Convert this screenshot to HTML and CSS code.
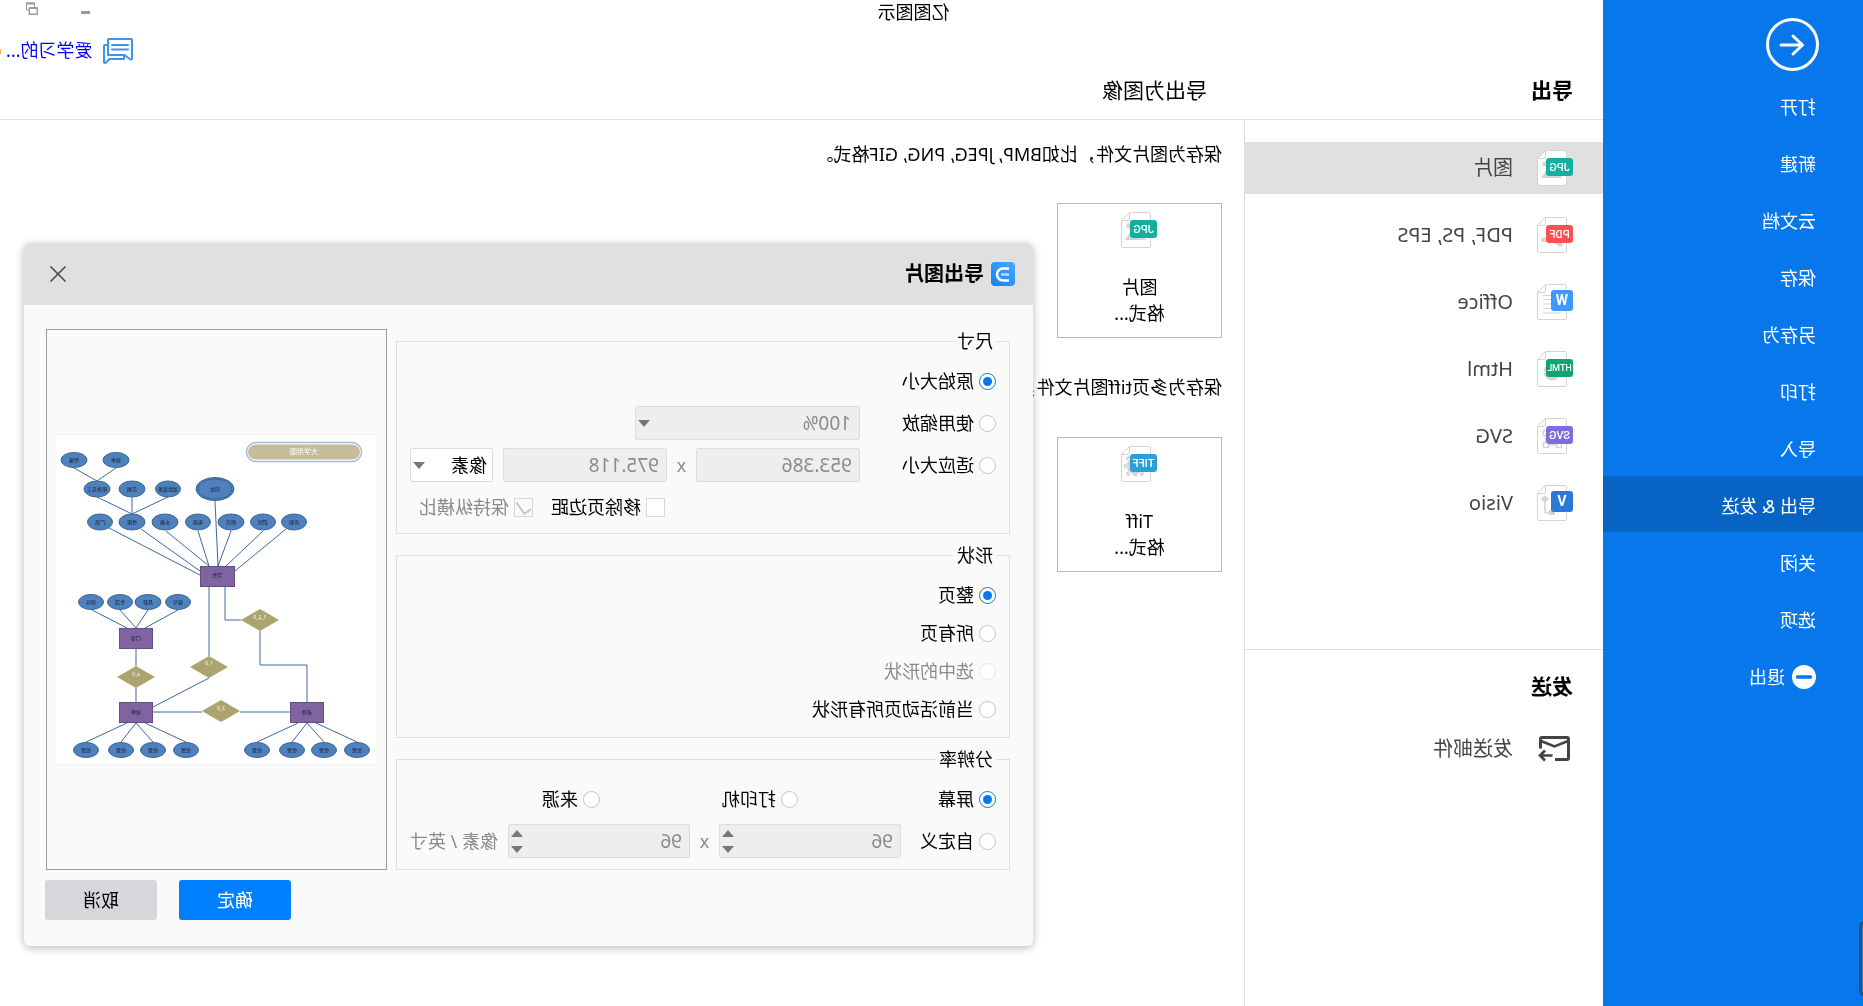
FILE: index.html
```html
<!DOCTYPE html>
<html lang="zh-CN">
<head>
<meta charset="utf-8">
<title>亿图图示</title>
<link rel="stylesheet" href="styles.css">
</head>
<body>
<svg class="defs" aria-hidden="true">
  <symbol id="doc" viewBox="0 0 36 36">
    <path d="M8 .5h19.500l8 8v25.500a1.500 1.500 0 0 1-1.500 1.500H8A1.500 1.500 0 0 1 6.500 34V2A1.500 1.500 0 0 1 8 .5z" fill="#fff" stroke="#d4d4d4"/>
    <path d="M27.500.5V7a1.500 1.500 0 0 0 1.500 1.500h6.500" fill="none" stroke="#d4d4d4"/>
  </symbol>
</svg>
<div class="app">
  <aside class="sidebar">
    <button class="back" type="button" aria-label="返回">
      <svg width="53" height="53" viewBox="0 0 53 53" fill="none" stroke="#fff" stroke-width="3" stroke-linecap="round" stroke-linejoin="round"><circle cx="26.500" cy="26.500" r="25"/><path d="M38 27H17M26 18l-9.500 9 9.500 9"/></svg>
    </button>
    <nav class="menu">
      <a href="#">打开</a>
      <a href="#">新建</a>
      <a href="#">云文档</a>
      <a href="#">保存</a>
      <a href="#">另存为</a>
      <a href="#">打印</a>
      <a href="#">导入</a>
      <a href="#" class="active">导出 &amp; 发送</a>
      <a href="#">关闭</a>
      <a href="#">选项</a>
      <a href="#"><svg width="24" height="24" viewBox="0 0 24 24"><circle cx="12" cy="12" r="12" fill="#fff"/><path d="M5.500 12h13" stroke="#0877ec" stroke-width="3.500" stroke-linecap="round"/></svg>退出</a>
    </nav>
    <span class="edge-tab"></span>
  </aside>

  <div class="main">
    <header class="top">
      <div class="app-title">亿图图示</div>
      <div class="window-buttons">
        <button type="button" aria-label="最小化"><svg width="12" height="14" viewBox="0 0 12 14"><path d="M1 10.500h9" stroke="#999" stroke-width="3"/></svg></button>
        <button type="button" aria-label="还原"><svg width="12" height="14" viewBox="0 0 12 14" fill="none" stroke="#999"><path d="M3.500 5V1h8v7H9" stroke-width="1"/><path d="M3 1.500h9M.5 6h8" stroke-width="2"/><path d="M.7 6v6.300h8V6z" stroke-width="1.400"/></svg></button>
      </div>
      <div class="account">
        <svg width="30" height="26" viewBox="0 0 30 26" fill="none" stroke="#3a95f0" stroke-width="2" stroke-linejoin="round" stroke-linecap="round"><path d="M2 1h22a1 1 0 0 1 1 1v15H8.500L2.500 21.500 1 21V2a1 1 0 0 1 1-1z"/><path d="M25 7h3a1 1 0 0 1 1 1v16.500L27.500 25 23.500 21H9v-4M5 7h16M5 11.500h16"/></svg>
        <a href="#">爱学习的...</a>
        <span class="vip"></span>
      </div>
      <div class="headings">
        <h1>导出</h1>
        <h2>导出为图像</h2>
      </div>
    </header>

    <div class="columns">
      <section class="formats">
        <ul class="format-list">
          <li><a href="#" class="selected"><svg class="ficon" viewBox="0 0 36 36"><use href="#doc"/><path d="M11 28l8-11 4 5 3-3 6 9z" fill="#d4d4d4"/><circle cx="28" cy="14" r="2.500" fill="#d4d4d4"/><rect y="8" width="27" height="18" rx="3" fill="#14b09f"/><text x="13.500" y="21" class="tag">JPG</text></svg>图片</a></li>
          <li><a href="#"><svg class="ficon" viewBox="0 0 36 36"><use href="#doc"/><path d="M10 28c0-4 7-5 10-6 5-1 12-3 12 1s-6 1-9 1c-5 0-9 9-13 4z" fill="#d4d4d4"/><rect y="8" width="27" height="18" rx="3" fill="#ff4f55"/><text x="13.500" y="21" class="tag">PDF</text></svg>PDF, PS, EPS</a></li>
          <li><a href="#"><svg class="ficon" viewBox="0 0 36 36"><use href="#doc"/><path d="M12 11.500h18M12 15.500h18M12 20h18M12 24.500h18M12 29h18" stroke="#d4d4d4"/><rect y="6" width="22" height="21" rx="3" fill="#3d98ff"/><text x="11" y="21" class="tag big">W</text></svg>Office</a></li>
          <li><a href="#"><svg class="ficon" viewBox="0 0 36 36"><use href="#doc"/><circle cx="21" cy="21" r="8.500" fill="#d4d4d4"/><path d="M12 21c3 4 14 4 18-2" stroke="#fff" fill="none"/><rect y="8" width="27" height="18" rx="3" fill="#0fa473"/><text x="13.500" y="20" class="tag small">HTML</text></svg>Html</a></li>
          <li><a href="#"><svg class="ficon" viewBox="0 0 36 36"><use href="#doc"/><path d="M11.500 24.500h5v5h-5zM24.500 24.500h5v5h-5zM24.500 12.500h5v5h-5zM16.500 27h8M27 17.500v7M14 17v7.500" stroke="#d4d4d4" fill="none" stroke-width="1.500"/><rect y="8" width="27" height="18" rx="3" fill="#7f6de0"/><text x="13.500" y="21" class="tag">SVG</text></svg>SVG</a></li>
          <li><a href="#"><svg class="ficon" viewBox="0 0 36 36"><use href="#doc"/><path d="M28 10l4 4-4 4-4-4z M18 25h6v5h-6z" fill="#d4d4d4"/><path d="M28 14v13.500h-7" stroke="#d4d4d4" fill="none" stroke-width="1.500"/><rect y="6" width="22" height="21" rx="3" fill="#2a78d8"/><text x="11" y="21" class="tag big">V</text></svg>Visio</a></li>
        </ul>
        <div class="send">
          <h3>发送</h3>
          <a href="#"><svg class="ficon" viewBox="0 0 36 36" fill="none" stroke="#444" stroke-width="3"><path d="M18 28.500H6a1.500 1.500 0 0 1-1.500-1.500V8A1.500 1.500 0 0 1 6 6.500h25A1.500 1.500 0 0 1 32.500 8v9.500" /><path d="M5 10l13.500 5.500L32 10" stroke-width="2.500"/><path d="M20.500 24.500H33M28 19.500l5 5-5 5" transform="matrix(-1 0 0 1 53.500 0)" stroke-width="0"/><path d="M20.500 24.500H32M28.500 19.500l-0 0M28 19.500l5 5-5 5" stroke-width="2.700"/></svg>发送邮件</a>
        </div>
      </section>

      <section class="content">
        <p>保存为图片文件，比如BMP, JPEG, PNG, GIF格式。</p>
        <button class="card" type="button">
          <svg class="ficon" viewBox="0 0 36 36"><use href="#doc"/><path d="M11 28l8-11 4 5 3-3 6 9z" fill="#d4d4d4"/><circle cx="28" cy="14" r="2.500" fill="#d4d4d4"/><rect y="8" width="27" height="18" rx="3" fill="#14b09f"/><text x="13.500" y="21" class="tag">JPG</text></svg>
          <span>图片<br>格式...</span>
        </button>
        <p>保存为多页tiff图片文件，</p>
        <button class="card" type="button">
          <svg class="ficon" viewBox="0 0 36 36"><use href="#doc"/><circle cx="22" cy="20" r="6.500" fill="none" stroke="#d4d4d4" stroke-width="4"/><path d="M22 10v3M22 27v3M31 20h2M28 13l2-2M28 27l2 2M16 27l-2 2" stroke="#d4d4d4" stroke-width="4"/><rect y="8" width="27" height="18" rx="3" fill="#2a9fd8"/><text x="13.500" y="21" class="tag">TIFF</text></svg>
          <span>Tiff<br>格式...</span>
        </button>
      </section>
    </div>
  </div>

  <form class="dialog" role="dialog" aria-labelledby="dlg-title">
    <header class="dialog-bar">
      <svg width="24" height="24" viewBox="0 0 24 24"><defs><linearGradient id="lg" x1="0" y1="0" x2="1" y2="1"><stop offset="0" stop-color="#45aaff"/><stop offset="1" stop-color="#1a7dff"/></linearGradient></defs><rect width="24" height="24" rx="4" fill="url(#lg)"/><path d="M6 6.500h6a6 6 0 0 1 0 12H6" fill="none" stroke="#fff" stroke-width="2.500"/><path d="M6 12.500h8" stroke="#b5dbff" stroke-width="2.500"/></svg>
      <h2 id="dlg-title">导出图片</h2>
      <button type="button" class="close" aria-label="关闭"><svg width="16" height="16" viewBox="0 0 16 16" stroke="#444" stroke-width="1.500"><path d="M.5.5l15 15M15.500.5l-15 15"/></svg></button>
    </header>
    <div class="dialog-body">
      <div class="settings">
        <fieldset class="size">
          <legend>尺寸</legend>
          <div class="row"><label class="lead"><input type="radio" name="size" checked>原始大小</label></div>
          <div class="row"><label class="lead"><input type="radio" name="size">使用缩放</label>
            <span class="combo zoom"><select disabled aria-label="缩放"><option>100%</option></select></span></div>
          <div class="row"><label class="lead"><input type="radio" name="size">适应大小</label>
            <input class="num" type="text" value="953.386" disabled aria-label="宽度"><span class="times">x</span><input class="num" type="text" value="975.118" disabled aria-label="高度">
            <span class="combo unit"><select aria-label="单位"><option>像素</option></select></span></div>
          <div class="row checks"><label><input type="checkbox">移除页边距</label><label class="off"><input type="checkbox" checked disabled>保持纵横比</label></div>
        </fieldset>
        <fieldset class="shape">
          <legend>形状</legend>
          <div class="row"><label><input type="radio" name="shape" checked>整页</label></div>
          <div class="row"><label><input type="radio" name="shape">所有页</label></div>
          <div class="row"><label class="off"><input type="radio" name="shape" disabled>选中的形状</label></div>
          <div class="row"><label><input type="radio" name="shape">当前活动页所有形状</label></div>
        </fieldset>
        <fieldset class="dpi">
          <legend>分辨率</legend>
          <div class="row thirds"><label><input type="radio" name="dpi" checked>屏幕</label><label><input type="radio" name="dpi">打印机</label><label><input type="radio" name="dpi">来源</label></div>
          <div class="row"><label class="custom"><input type="radio" name="dpi">自定义</label>
            <span class="spin"><input type="number" value="96" disabled aria-label="水平分辨率"></span><span class="times">x</span><span class="spin"><input type="number" value="96" disabled aria-label="垂直分辨率"></span>
            <span class="unit-text">像素 / 英寸</span></div>
        </fieldset>
      </div>
      <div class="preview">
        <svg class="paper" viewBox="0 0 322 329">
          <g stroke="#3d6a9c" stroke-width="1" fill="none">
            <path d="M303 33L280 46 261 33M280 62L245 79V62M209 62L245 79"/>
            <path d="M268 93L177 140M236 94L177 136M211 96L168 131 179 96M162 66L159 131 146 96M114 96L151 131M91 94L142 136"/>
            <path d="M285 175L250 193M257 175L241 193 229 175M199 175L232 193M168 152V221M168 243L224 272M241 214V231M241 253V267M224 277H175M137 277H87"/>
            <path d="M152 152V185H136M117 196V230H70V267"/>
            <path d="M250 288L291 307M256 307L241 288 224 307M232 288L191 307M79 288L120 307M85 307L70 288 53 307M61 288L20 307"/>
          </g>
          <rect x="15.500" y="7.500" width="115" height="19" rx="9.500" fill="#fff" stroke="#a9b8dc" stroke-width="1.500"/>
          <rect x="17" y="9.500" width="112" height="15" rx="7.500" fill="#c4bd97"/>
          <g fill="#4f81bd" stroke="#3a6698">
            <ellipse cx="303" cy="25" rx="13" ry="7.500"/><ellipse cx="261" cy="25" rx="13" ry="7.500"/>
            <ellipse cx="280" cy="54" rx="13" ry="8"/><ellipse cx="245" cy="54" rx="13" ry="8"/><ellipse cx="209" cy="54" rx="12.500" ry="8"/>
            <ellipse cx="162" cy="54" rx="19" ry="11.500"/><ellipse cx="162" cy="54" rx="17" ry="10"/>
            <ellipse cx="277" cy="87" rx="12.500" ry="8"/><ellipse cx="245" cy="87" rx="13" ry="8"/><ellipse cx="212" cy="87" rx="13" ry="8"/><ellipse cx="179" cy="87" rx="12.500" ry="8"/><ellipse cx="146" cy="87" rx="13" ry="8"/><ellipse cx="114" cy="87" rx="12.500" ry="8"/><ellipse cx="83" cy="87" rx="12.500" ry="8"/>
            <ellipse cx="286" cy="167" rx="12.500" ry="7.500"/><ellipse cx="257" cy="167" rx="12.500" ry="7.500"/><ellipse cx="229" cy="167" rx="13" ry="7.500"/><ellipse cx="199" cy="167" rx="12.500" ry="7.500"/>
            <ellipse cx="291" cy="315" rx="12.500" ry="7.500"/><ellipse cx="256" cy="315" rx="12.500" ry="7.500"/><ellipse cx="224" cy="315" rx="12.500" ry="7.500"/><ellipse cx="191" cy="315" rx="12.500" ry="7.500"/>
            <ellipse cx="120" cy="315" rx="12.500" ry="7.500"/><ellipse cx="85" cy="315" rx="12.500" ry="7.500"/><ellipse cx="53" cy="315" rx="12.500" ry="7.500"/><ellipse cx="20" cy="315" rx="12.500" ry="7.500"/>
          </g>
          <g fill="#8064a2" stroke="#664e85">
            <rect x="142.500" y="131.500" width="34" height="20"/><rect x="224.500" y="193.500" width="33" height="20"/><rect x="224.500" y="267.500" width="33" height="20"/><rect x="53.500" y="267.500" width="33" height="20"/>
          </g>
          <path d="M241 231l19 11-19 11-19-11zM168 221l19 11-19 11-19-11zM117 174l19 11-19 11-19-11zM156 265l19 11-19 11-19-11z" fill="#aca46f"/>
          <g class="node-text">
            <text x="303" y="27">传输</text><text x="261" y="27">效率</text><text x="280" y="56">研发员工</text><text x="245" y="56">示图</text><text x="209" y="56">试验设备</text><text x="162" y="56">岗位</text>
            <text x="277" y="89">厂商</text><text x="245" y="89">性能</text><text x="212" y="89">水箱</text><text x="179" y="89">电源</text><text x="146" y="89">研究</text><text x="114" y="89">识别</text><text x="83" y="89">房租</text>
            <text x="160" y="142">学生</text><text x="286" y="169">领导</text><text x="257" y="169">生活</text><text x="229" y="169">月薪</text><text x="199" y="169">编号</text>
            <text x="241" y="205">门诊</text><text x="241" y="279">效率</text><text x="70" y="279">老师</text>
            <text x="291" y="317">位置</text><text x="256" y="317">位置</text><text x="224" y="317">位置</text><text x="191" y="317">位置</text><text x="120" y="317">位置</text><text x="85" y="317">位置</text><text x="53" y="317">位置</text><text x="20" y="317">位置</text>
          </g>
          <g class="node-text light">
            <text x="73" y="19" class="pill">大学用图</text>
            <text x="117" y="184">1_2_0</text><text x="168" y="230">1_0</text><text x="241" y="241">a_0</text><text x="156" y="275">2_0</text>
          </g>
        </svg>
      </div>
    </div>
    <footer class="dialog-actions">
      <button type="submit" class="ok">确定</button>
      <button type="button" class="cancel">取消</button>
    </footer>
  </form>
</div>
</body>
</html>
```
FILE: styles.css
```css
* { box-sizing: border-box; }

body {
  margin: 0;
  background: #fff;
  color: #000;
  font: 18px/26px "Noto Sans", "Noto Sans CJK SC", sans-serif;
  font-kerning: none;
  overflow: hidden;
}

button, input, select { font: inherit; font-kerning: none; color: inherit; }
button { padding: 0; border: 0; background: none; }
a { color: inherit; text-decoration: none; }
h1, h2, h3, p, ul { margin: 0; padding: 0; }
svg { display: block; flex: none; }
.defs { position: absolute; width: 0; height: 0; }

/* The whole window is shown mirrored, left to right. */
.app {
  position: relative;
  display: flex;
  min-height: 100vh;
  transform: scaleX(-1);
}

/* Sidebar */
.sidebar {
  position: relative;
  flex: none;
  width: 260px;
  padding-top: 18px;
  background: #0877ec;
  color: #fff;
}
.back { display: block; margin-left: 44px; }
.menu {
  display: flex;
  flex-direction: column;
  gap: 1px;
  margin-top: 6px;
}
.menu a {
  display: flex;
  align-items: center;
  gap: 7px;
  height: 56px;
  padding: 4px 0 0 47px;
}
.menu .active { background: #0764c4; }
.edge-tab {
  position: absolute;
  left: -6px;
  bottom: 10px;
  width: 10px;
  height: 75px;
  border: 3px solid #29507c;
  border-radius: 5px;
  background: #3c7fc9;
}

/* Header */
.main {
  flex: 1;
  min-width: 0;
  display: flex;
  flex-direction: column;
}
.top {
  position: relative;
  height: 120px;
  border-bottom: 1px solid #dfdfdf;
}
.app-title {
  position: absolute;
  top: 0;
  left: -224px;
  right: 0;
  line-height: 24px;
  text-align: center;
}
.window-buttons {
  position: absolute;
  top: 2px;
  right: 26px;
  display: flex;
  gap: 41px;
}
.account {
  position: absolute;
  top: 38px;
  right: 0;
  display: flex;
  align-items: center;
  gap: 11px;
  color: #00f;
}
.account a { line-height: 24px; margin-bottom: 2px; }
.vip {
  width: 1px;
  height: 5px;
  margin-left: -6px;
  background: #f7b24a;
}
.headings {
  display: flex;
  height: 100%;
  padding: 76px 0 0 30px;
  line-height: 28px;
}
.headings h1, .headings h2, .send h3 { font-size: 21px; }
.headings h1 { width: 366px; }
.headings h2 { font-weight: 400; }

/* Format list */
.columns { display: flex; flex: 1; }
.formats {
  flex: none;
  width: 359px;
  border-right: 1px solid #dfdfdf;
  color: #444;
  font-size: 20px;
}
.format-list {
  display: flex;
  flex-direction: column;
  gap: 15px;
  padding: 22px 0 120px;
  list-style: none;
}
.format-list a, .send a {
  display: flex;
  align-items: center;
  gap: 24px;
  height: 52px;
  padding-left: 30px;
}
.format-list .selected { background: #e0e0e0; }
.ficon { width: 36px; height: 36px; }
.tag {
  fill: #fff;
  font: 500 11px Roboto, sans-serif;
  text-anchor: middle;
}
.tag.small { font-size: 9px; }
.tag.big { font-size: 14px; font-weight: 700; }
.send { border-top: 1px solid #dfdfdf; }
.send h3 {
  padding: 22px 0 23px 30px;
  color: #000;
  line-height: 28px;
}

/* Content */
.content { flex: 1; padding: 21px 0 0 22px; }
.content p { white-space: nowrap; }
.card {
  display: flex;
  flex-direction: column;
  align-items: center;
  gap: 26px;
  width: 165px;
  height: 135px;
  margin: 36px 0;
  padding-top: 8px;
  border: 1px solid #b8b8b8;
}
.card + p { padding-bottom: 1px; }

/* Export dialog */
.dialog {
  position: absolute;
  top: 243px;
  right: 24px;
  width: 1009px;
  border-radius: 6px;
  background: #fafafa;
  box-shadow: 0 2px 8px rgba(0, 0, 0, .28);
}
.dialog-bar {
  display: flex;
  align-items: center;
  gap: 7px;
  height: 62px;
  padding: 0 26px 0 18px;
  border-radius: 6px 6px 0 0;
  background: #e0e0e0;
}
.dialog-bar h2 { font-size: 20px; }
.close { margin-left: auto; }
.dialog-body {
  display: flex;
  gap: 9px;
  padding: 24px 23px 0;
}
.settings {
  flex: 1;
  display: flex;
  flex-direction: column;
  gap: 9px;
}
fieldset {
  display: flex;
  flex-direction: column;
  gap: 8px;
  margin: 0;
  padding: 11px 13px 9px;
  border: 1px solid #dedede;
}
fieldset.shape { gap: 4px; padding-bottom: 11px; }
fieldset.dpi { padding-bottom: 11px; }
legend { padding: 0 3px; line-height: 24px; }
.row {
  display: flex;
  align-items: center;
  height: 34px;
}
.row label { display: flex; align-items: center; gap: 5px; }
.row .lead { width: 136px; }
.row .custom { width: 95px; }
.off, .times, .unit-text { color: #8a8a8a; }
.times { width: 29px; text-align: center; }

input[type="radio"], input[type="checkbox"] {
  appearance: none;
  flex: none;
  display: grid;
  place-items: center;
  width: 17px;
  height: 17px;
  margin: 0;
  border: 1px solid #c3c3c3;
  border-radius: 50%;
  background: #fff;
}
input[type="radio"]:checked { border-color: #0877ec; }
input[type="radio"]:checked::before {
  content: "";
  width: 9px;
  height: 9px;
  border-radius: 50%;
  background: #0877ec;
}
input[type="radio"]:disabled { border-color: #e4e4e4; }
input[type="checkbox"] {
  width: 19px;
  height: 19px;
  border-color: #d8d8d8;
  border-radius: 0;
}
input[type="checkbox"]:disabled { background: #fafafa; }
input[type="checkbox"]:checked::before {
  content: "";
  width: 7px;
  height: 13px;
  margin-bottom: 3px;
  border: solid #c8c8c8;
  border-width: 0 2px 2px 0;
  transform: rotate(35deg);
}
.checks { gap: 18px; padding-left: 331px; }
.thirds { display: grid; grid-template-columns: 198px 198px 1fr; }

.num, .combo select, .spin input {
  appearance: none;
  width: 100%;
  height: 34px;
  margin: 0;
  padding: 0 7px;
  border: 1px solid #dcdcdc;
  border-radius: 2px;
  background: #fff;
  opacity: 1;
}
.num:disabled, .combo select:disabled, .spin input:disabled {
  background: #eee;
  color: #8a8a8a;
  font-size: 19px;
}
.num { width: 164px; }
.combo, .spin { position: relative; }
.combo select { padding: 0 5px; }
.zoom { width: 225px; }
.zoom select { padding: 0 8px; }
.unit { width: 83px; margin-left: 10px; }
.spin { width: 182px; }
.combo::after, .spin::before, .spin::after {
  content: "";
  position: absolute;
  right: 3px;
  top: 14px;
  border: solid transparent;
  border-width: 0 6px;
  border-top: 7px solid #777;
}
.spin::after { top: 22px; }
.spin::before { top: 6px; border-top: 0; border-bottom: 7px solid #777; }
.unit-text { margin-left: 10px; white-space: nowrap; }

.preview {
  flex: none;
  display: grid;
  place-items: center;
  width: 341px;
  border: 1px solid #9a9a9a;
}
.paper {
  width: 322px;
  height: 329px;
  background: #fff;
  outline: 1px solid #f3f3f3;
}
.node-text {
  font-size: 5px;
  text-anchor: middle;
  fill: #0e1a2b;
}
.node-text.light { fill: #fff; }
.node-text .pill { font-size: 7px; }

.dialog-actions {
  display: flex;
  justify-content: flex-end;
  gap: 22px;
  padding: 10px 21px 26px;
}
.dialog-actions button {
  width: 112px;
  height: 40px;
  border-radius: 3px;
  background: #d6d7da;
}
.dialog-actions .ok { background: #0080ff; color: #fff; }
```
